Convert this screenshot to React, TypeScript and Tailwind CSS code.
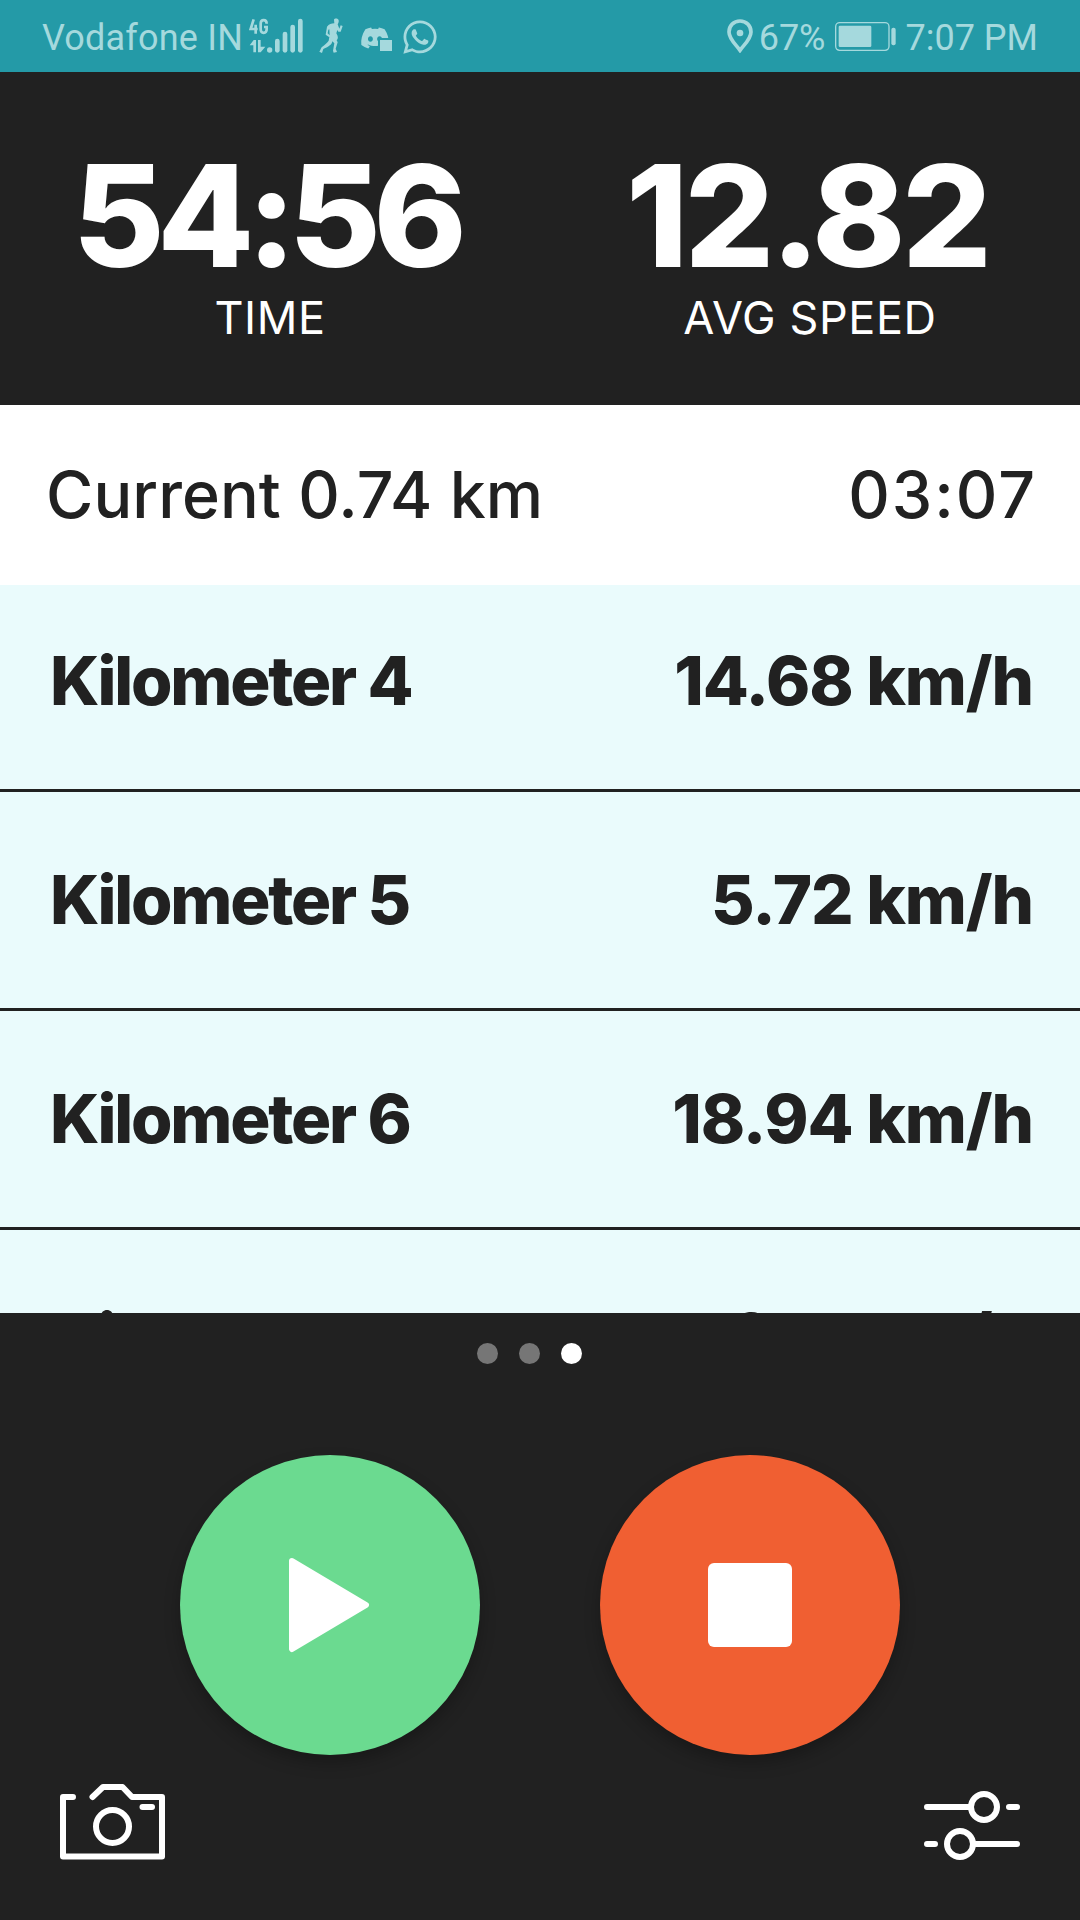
import { FaDiscord, FaWhatsapp } from "react-icons/fa";

const SPLITS = [
  { label: "Kilometer 4", speed: "14.68 km/h" },
  { label: "Kilometer 5", speed: "5.72 km/h" },
  { label: "Kilometer 6", speed: "18.94 km/h" },
  { label: "Kilometer 7", speed: "6.17 km/h" },
];

function SignalIcon() {
  return (
    <svg width="54" height="36" viewBox="0 0 162 108" fill="currentColor">
      <path
        d="M14 4 L5 33 H26 M20 20 V47 M53 17 C53 3 35 3 35 17 V34 C35 48 53 48 53 34 V27 H45"
        fill="none"
        stroke="currentColor"
        strokeWidth="8"
      />
      <path d="M2 82 L14 66 H21 V103 H13 V82 H2 Z M27 66 H35 V86 H49 L35 103 H27 Z" />
      <circle cx="62" cy="96" r="8" />
      <rect x="78" y="62" width="14" height="42" rx="7" />
      <rect x="101" y="41" width="14" height="63" rx="7" />
      <rect x="124" y="20" width="14" height="84" rx="7" />
      <rect x="147" y="2" width="14" height="102" rx="7" />
    </svg>
  );
}

function RunnerIcon() {
  return (
    <svg width="24" height="36" viewBox="0 0 72 108" fill="currentColor">
      <path d="M45 5 C47 0 58 1 59 7 C60 14 57 17 56 19 L61 32 L65 22 L71 24 L65 41 H58 L55 36 L52 46 C58 56 58 62 53 67 L56 73 L50 92 L54 102 L44 104 L42 98 L46 76 L40 70 C39 79 30 86 13 93 L9 105 L1 101 C5 97 5 91 8 88 C18 80 25 74 29 68 L32 52 L31 34 L28 35 L26 46 L34 54 L30 57 L20 50 L24 26 C30 18 37 17 46 16 Z" />
    </svg>
  );
}

function PinIcon() {
  return (
    <svg width="26" height="34" viewBox="0 0 78 102" fill="none">
      <path
        d="M39 94 C26 76 6 60 6 39 C6 20 20 6 39 6 C58 6 72 20 72 39 C72 60 52 76 39 94 Z"
        stroke="currentColor"
        strokeWidth="11"
      />
      <circle cx="39" cy="42" r="10" fill="currentColor" />
    </svg>
  );
}

function BatteryIcon() {
  return (
    <svg width="62" height="29" viewBox="0 0 186 87">
      <rect x="2" y="2" width="160" height="83" rx="12" fill="none" stroke="currentColor" strokeWidth="4" />
      <rect x="11" y="11" width="98" height="64" rx="4" fill="currentColor" />
      <rect x="169" y="17" width="13" height="53" rx="6" fill="currentColor" />
    </svg>
  );
}

function StatusBar() {
  return (
    <div className="flex h-[72px] items-center justify-between bg-[#249aa7] pl-[42px] pr-[42px] font-[Roboto,sans-serif] text-[36px] leading-[68px] text-[#a5d9dd]">
      <div className="flex items-center">
        <span className="pt-[4px] tracking-[0.2px]">Vodafone IN</span>
        <div className="ml-[6px]">
          <SignalIcon />
        </div>
        <div className="ml-[16px]">
          <RunnerIcon />
        </div>
        <div className="relative ml-[17px] h-[30px] w-[32px]">
          <FaDiscord size={30} className="mt-[2px]" />
          <span className="absolute bottom-0 right-0 h-[13px] w-[14px] border-l-2 border-t-2 border-[#249aa7] bg-[#a5d9dd]" />
        </div>
        <FaWhatsapp size={38} className="ml-[9px] mt-[1px]" />
      </div>
      <div className="flex items-center">
        <PinIcon />
        <span className="ml-[6px] pt-[4px]">67%</span>
        <div className="ml-[9px] pt-[1px]">
          <BatteryIcon />
        </div>
        <span className="ml-[9px] pt-[4px]">7:07 PM</span>
      </div>
    </div>
  );
}

type StatProps = { value: string; label: string; valueClass: string };

function Stat({ value, label, valueClass }: StatProps) {
  return (
    <div className="flex flex-1 flex-col items-center pt-[73px] text-white">
      <div className={`text-[141px] font-extrabold leading-[141px] ${valueClass}`}>{value}</div>
      <div className="mt-[9px] text-[45px] font-normal leading-[45px] tracking-[0.6px]">{label}</div>
    </div>
  );
}

function CameraIcon() {
  return (
    <svg width="106" height="76" viewBox="0 0 106 76" fill="none" stroke="white" strokeWidth="6" strokeLinecap="round" strokeLinejoin="round">
      <path d="M13 13 H3 V72.5 H102 V13 H72 L62.5 3 H43 L32.5 13" />
      <path d="M82.5 23 H92" />
      <circle cx="52.5" cy="42.5" r="16.5" />
    </svg>
  );
}

function SlidersIcon() {
  return (
    <svg width="96" height="70" viewBox="0 0 96 70" fill="none" stroke="white" strokeWidth="6" strokeLinecap="round">
      <path d="M3 16 H46 M85 16 H93 M3 53 H11 M52 53 H93" />
      <circle cx="60" cy="16" r="13" />
      <circle cx="36" cy="53" r="13" />
    </svg>
  );
}

export default function App() {
  return (
    <div className="flex h-[1920px] w-[1080px] flex-col overflow-hidden bg-[#212121] font-[Inter,sans-serif] text-[#212121]">
      <StatusBar />

      <header className="flex h-[333px]">
        <Stat value="54:56" label="TIME" valueClass="pr-[8px] tracking-[-7.5px]" />
        <Stat value="12.82" label="AVG SPEED" valueClass="pr-[6px] tracking-[-3.8px]" />
      </header>

      <div className="flex h-[180px] justify-between bg-white pl-[46px] pr-[43px] text-[64.5px] font-medium leading-[180px]">
        <span className="tracking-[0.1px]">Current 0.74 km</span>
        <span className="tracking-[2px]">03:07</span>
      </div>

      {/* list is scrolled, so the first and last rows are cut */}
      <div className="h-[728px] overflow-hidden bg-[#eafbfc]">
        <div className="-mt-[12px]">
          {SPLITS.map((split) => (
            <div
              key={split.label}
              className="flex h-[219px] justify-between border-b-[3px] border-[#212121] pl-[50px] pr-[47px] text-[67px] font-extrabold leading-[216px]"
            >
              <span className="tracking-[-2.2px]">{split.label}</span>
              <span className="tracking-[-1.1px]">{split.speed}</span>
            </div>
          ))}
        </div>
      </div>

      <div className="flex justify-center gap-[21px] pr-[21px] pt-[30px]">
        <span className="size-[21px] rounded-full bg-[#767676]" />
        <span className="size-[21px] rounded-full bg-[#767676]" />
        <span className="size-[21px] rounded-full bg-white" />
      </div>

      <div className="mt-[91px] flex justify-center gap-[120px]">
        <button className="flex size-[300px] items-center justify-center rounded-full bg-[#6bda90] pr-[2px] shadow-[0_8px_16px_rgba(0,0,0,0.25)]">
          <svg width="82" height="96" viewBox="0 0 82 96" fill="white" stroke="white" strokeWidth="6" strokeLinejoin="round">
            <path d="M4 4 L78 48 L4 92 Z" />
          </svg>
        </button>
        <button className="flex size-[300px] items-center justify-center rounded-full bg-[#f05f32] shadow-[0_8px_16px_rgba(0,0,0,0.25)]">
          <span className="size-[84px] rounded-[6px] bg-white" />
        </button>
      </div>

      <div className="mt-[29px] flex items-start justify-between pl-[60px] pr-[60px]">
        <CameraIcon />
        <div className="mt-[7px]">
          <SlidersIcon />
        </div>
      </div>
    </div>
  );
}
